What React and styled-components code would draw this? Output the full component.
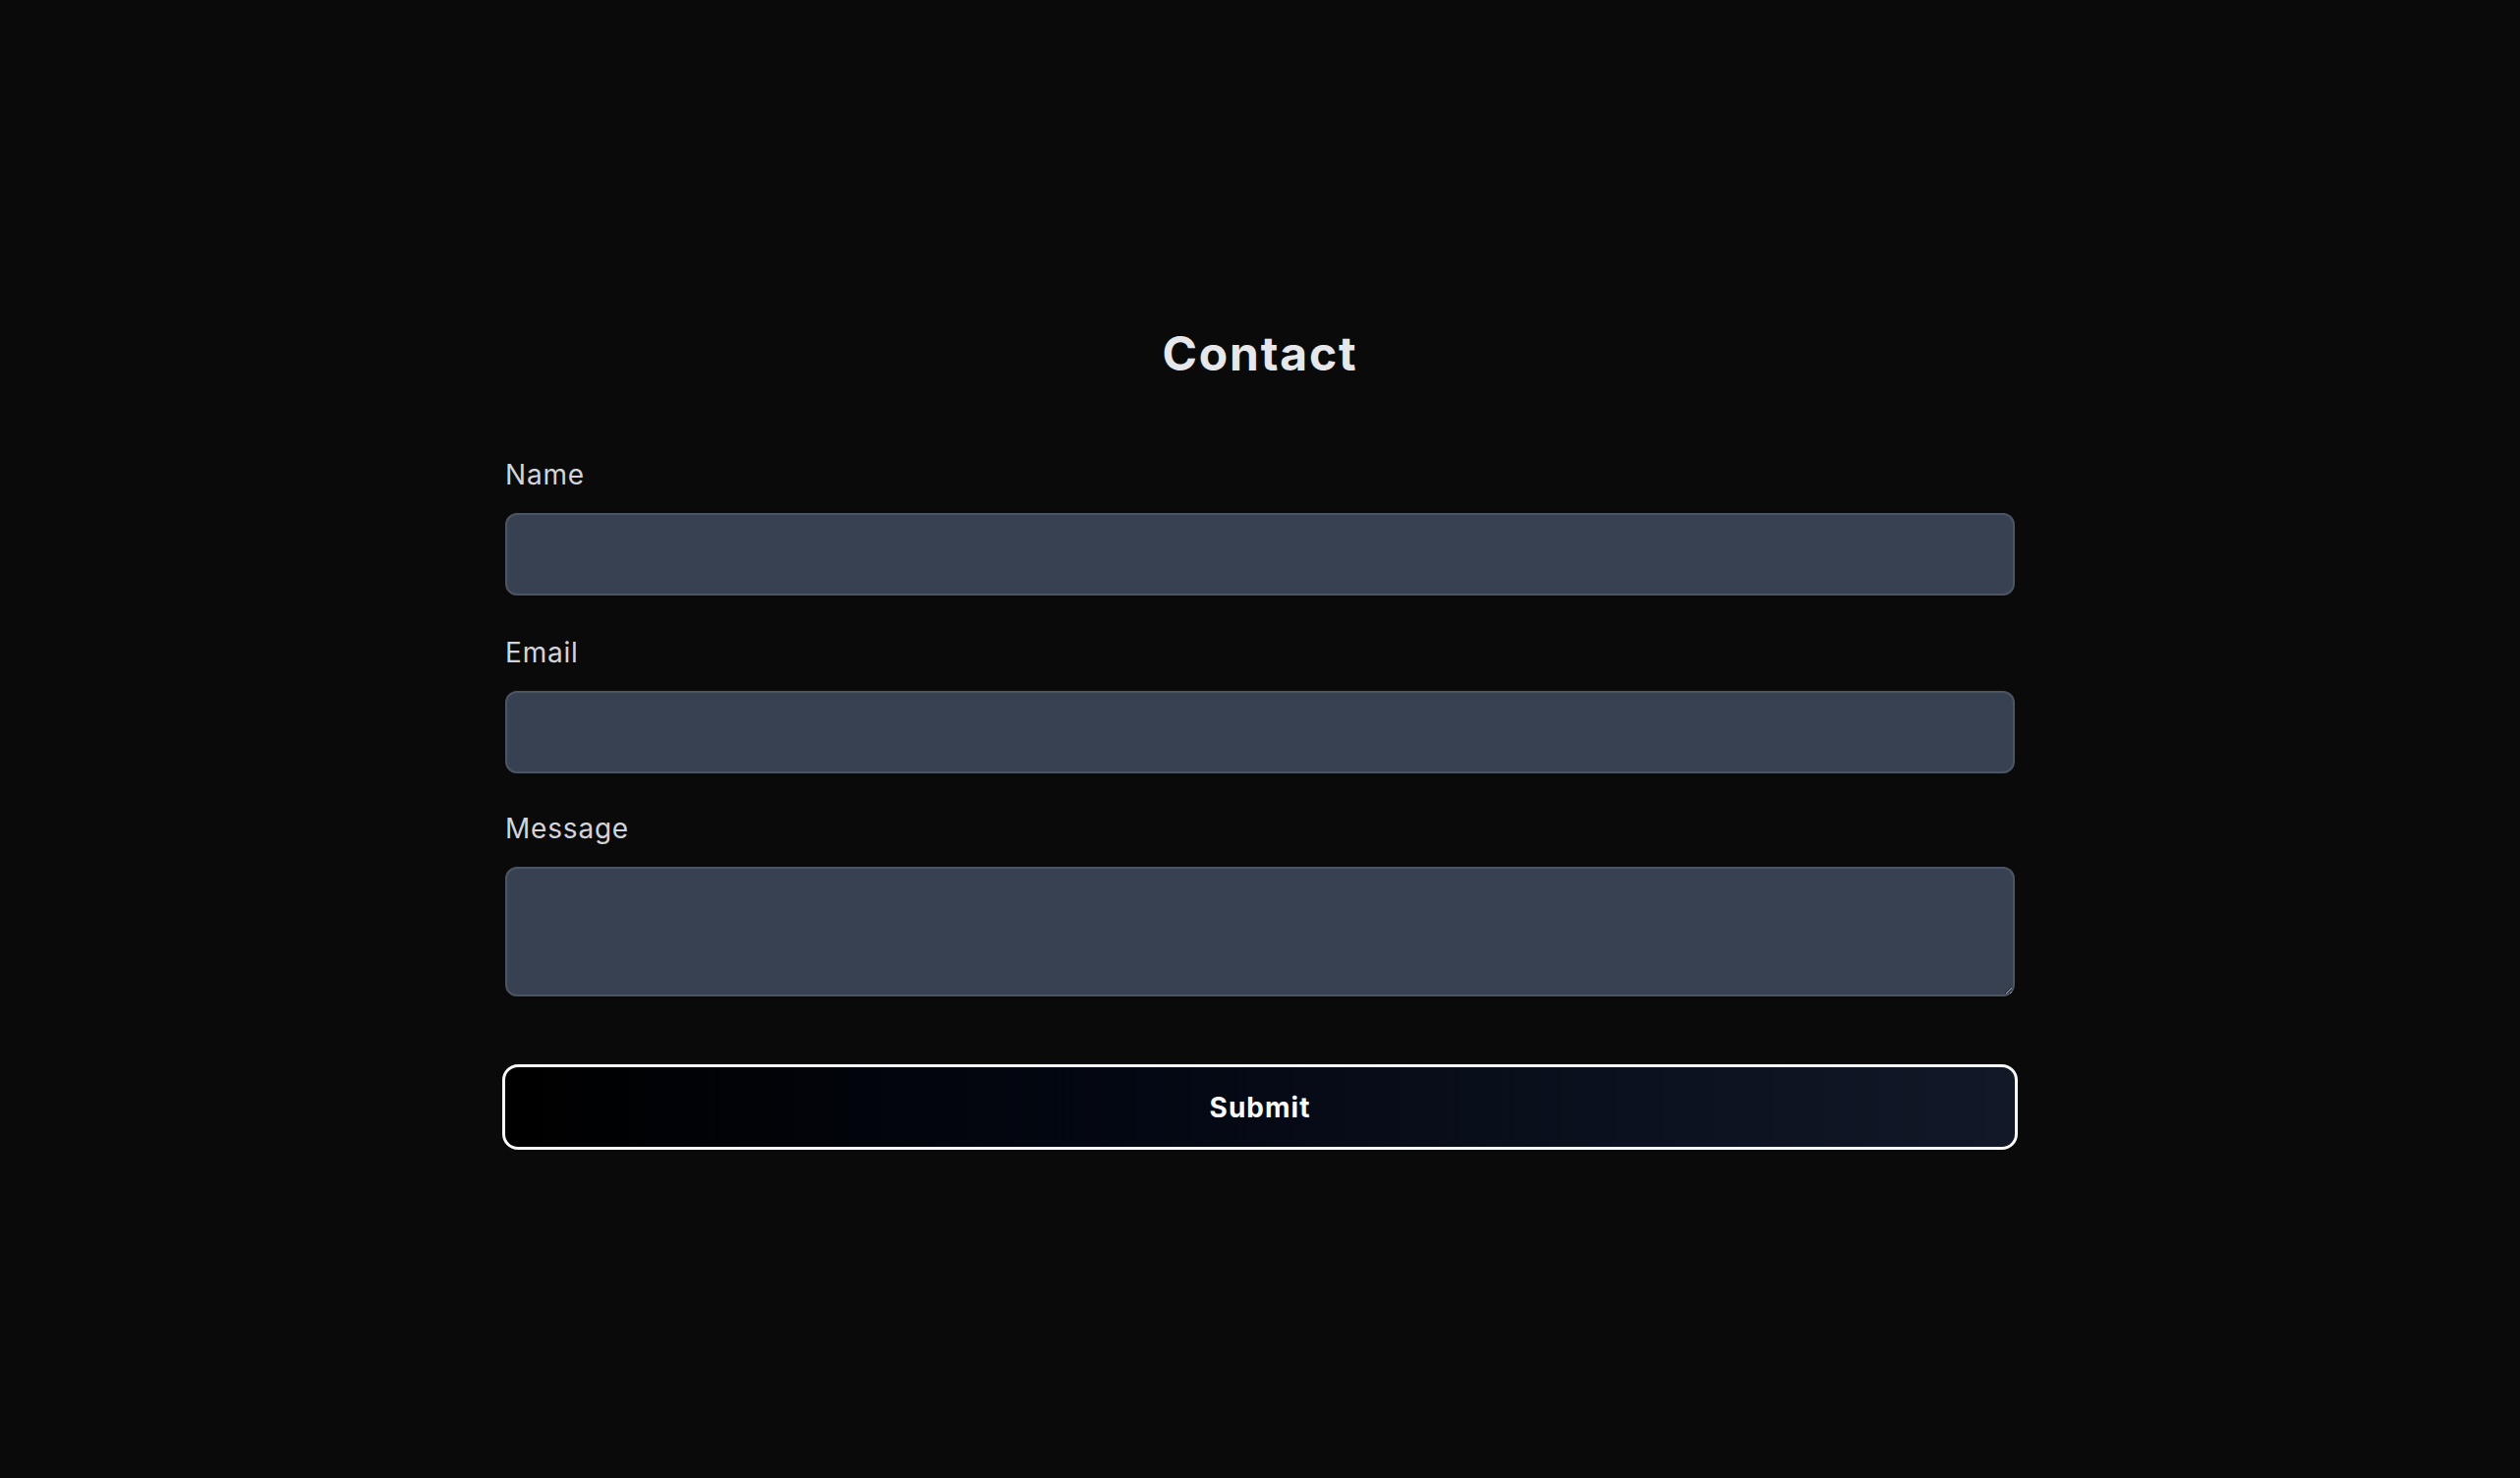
import React from "react";
import styled, { createGlobalStyle } from "styled-components";

const Global = createGlobalStyle`
  html, body { margin: 0; padding: 0; background: #0a0a0a; }
  body { font-family: Inter, "Open Sans", sans-serif; }
  * { box-sizing: border-box; }
`;

const Page = styled.main`
  min-height: 1504px;
  background: #0a0a0a;
  display: flex;
  justify-content: center;
  padding-top: 331px;
`;

const Form = styled.form`
  width: 1536px;
  display: flex;
  flex-direction: column;
`;

const Title = styled.h1`
  margin: 0 0 73px;
  text-align: center;
  font-size: 48px;
  line-height: 58px;
  font-weight: 700;
  color: #e5e7eb;
  letter-spacing: 1.8px;
`;

const Field = styled.div`
  display: flex;
  flex-direction: column;
  margin-bottom: ${(p) => p.$gap}px;
`;

const Label = styled.label`
  display: block;
  font-size: 28px;
  line-height: 42px;
  color: #d1d5db;
  margin-bottom: 18px;
  letter-spacing: 0.8px;
`;

const Input = styled.input`
  width: 100%;
  height: 84px;
  background: #374151;
  border: 2px solid #4b5563;
  border-radius: 12px;
  padding: 0 20px;
  color: #f3f4f6;
  font: inherit;
  font-size: 28px;
  outline: none;
`;

const TextArea = styled.textarea`
  width: 100%;
  height: 132px;
  background: #374151;
  border: 2px solid #4b5563;
  border-radius: 12px;
  padding: 16px 20px;
  color: #f3f4f6;
  font: inherit;
  font-size: 28px;
  resize: vertical;
  outline: none;
  display: block;
`;

const Submit = styled.button`
  margin: 0 -3px;
  width: calc(100% + 6px);
  height: 87px;
  border: 3px solid #f9fafb;
  border-radius: 16px;
  background: linear-gradient(to right, #000000 0%, #030712 40%, #111827 100%);
  color: #f9fafb;
  font-family: inherit;
  font-size: 28px;
  font-weight: 700;
  letter-spacing: 1px;
  cursor: pointer;
`;

export default function App() {
  return (
    <>
      <Global />
      <Page>
        <Form onSubmit={(e) => e.preventDefault()}>
          <Title>Contact</Title>
          <Field $gap={37}>
            <Label htmlFor="name">Name</Label>
            <Input id="name" type="text" />
          </Field>
          <Field $gap={35}>
            <Label htmlFor="email">Email</Label>
            <Input id="email" type="email" />
          </Field>
          <Field $gap={69}>
            <Label htmlFor="message">Message</Label>
            <TextArea id="message" />
          </Field>
          <Submit type="submit">Submit</Submit>
        </Form>
      </Page>
    </>
  );
}
